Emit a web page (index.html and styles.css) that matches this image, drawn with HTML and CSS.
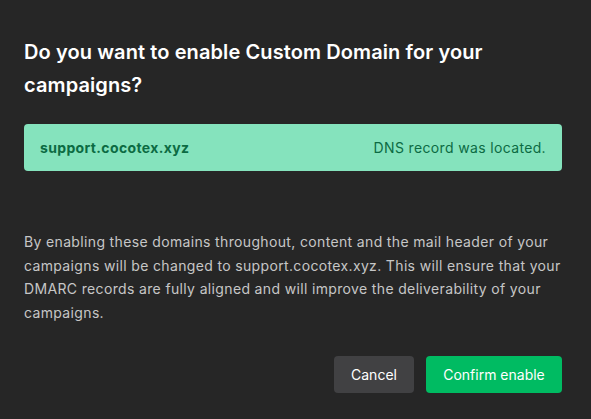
FILE: index.html
```html
<!DOCTYPE html>
<html lang="en">
<head>
<meta charset="utf-8">
<link rel="stylesheet" href="styles.css">
</head>
<body>
<div class="dialog">
  <h1 class="title">Do you want to enable Custom Domain for your campaigns?</h1>
  <div class="domain">
    <span class="domain-name">support.cocotex.xyz</span>
    <span class="domain-status">DNS record was located.</span>
  </div>
  <p class="desc">By enabling these domains throughout, content and the mail header of your campaigns will be changed to support.cocotex.xyz. This will ensure that your DMARC records are fully aligned and will improve the deliverability of your campaigns.</p>
  <div class="actions">
    <button class="btn btn-cancel">Cancel</button>
    <button class="btn btn-confirm">Confirm enable</button>
  </div>
</div>
</body>
</html>
```
FILE: styles.css
```css
* { box-sizing: border-box; }
html, body {
  margin: 0;
  padding: 0;
  background: #262626;
}
body {
  font-family: Inter, "Noto Sans", sans-serif;
  width: 591px;
  height: 419px;
  overflow: hidden;
}
.dialog {
  padding: 36px 29px 26px 24px;
  display: flex;
  flex-direction: column;
}
.title {
  margin: 0;
  font-size: 20px;
  font-weight: 600;
  line-height: 33px;
  color: #ffffff;
  letter-spacing: 0.1px;
}
.domain {
  margin-top: 22px;
  height: 47px;
  background: #85e3bd;
  border-radius: 4px;
  display: flex;
  align-items: center;
  justify-content: space-between;
  padding: 0 16px;
  font-size: 14px;
  letter-spacing: 0.35px;
  color: #0c6b43;
}
.domain-name {
  font-weight: 700;
}
.domain-status {
  font-weight: 400;
}
.desc {
  margin: 59px 0 0 0;
  font-size: 14px;
  line-height: 23.7px;
  letter-spacing: 0.35px;
  color: #c6c6c6;
}
.actions {
  margin-top: 31px;
  display: flex;
  justify-content: flex-end;
  gap: 12px;
}
.btn {
  height: 37px;
  border: none;
  border-radius: 4px;
  font-family: Inter, "Noto Sans", sans-serif;
  font-size: 14px;
  font-weight: 400;
  letter-spacing: 0;
  white-space: nowrap;
  color: #ffffff;
  padding: 0;
  cursor: pointer;
}
.btn-cancel {
  width: 80px;
  background: #414143;
}
.btn-confirm {
  width: 136px;
  background: #00bb62;
}
```
